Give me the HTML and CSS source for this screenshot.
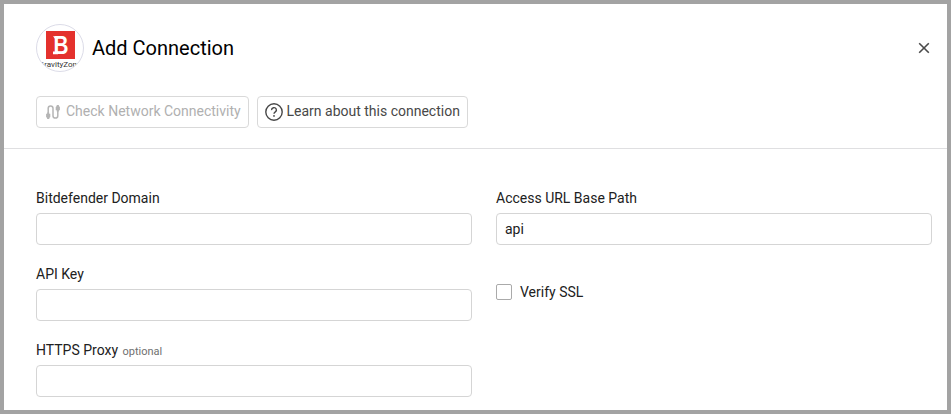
FILE: index.html
```html
<!DOCTYPE html>
<html lang="en">
<head>
<meta charset="utf-8">
<title>Add Connection</title>
<link rel="stylesheet" href="styles.css">
</head>
<body>
<main class="dialog">
  <header class="header">
    <div class="title-row">
      <div class="logo">
        <span class="logo-mark"><svg width="29" height="28" viewBox="0 0 29 28"><path d="M7 5.200h5v2.800H9.200zM7 23.300h5v-2.800H7z" fill="#fff"/><text class="logo-letter" x="7.600" y="23.300" textLength="15" lengthAdjust="spacingAndGlyphs">B</text></svg></span>
        <span class="logo-name">GravityZone</span>
      </div>
      <h1 class="title">Add Connection</h1>
      <button class="close" aria-label="Close">
        <svg width="12" height="12" viewBox="0 0 12 12"><path d="M1.200 1.200l9.600 9.600M10.800 1.200L1.200 10.800" fill="none" stroke="#4a4a4a" stroke-width="1.600"/></svg>
      </button>
    </div>
    <div class="actions">
      <button class="btn btn-check" disabled>
        <svg width="16" height="16" viewBox="0 0 16 16"><path d="M4.200 10V4.300a2.400 2.400 0 0 1 4.800 0v7.400a2.400 2.400 0 0 0 4.800 0V6" fill="none" stroke="#b5b5b5" stroke-width="1.500"/><path d="M3.200 8.500h2v1.300H6.300v3.200l-1 1v1h-2.200v-1l-1-1V9.800h1.100zM12.700 1h2.200v1l1 1v3.200h-1v1.300h-2.200V6.200h-1V3l1-1z" fill="#b5b5b5"/></svg>
        <span>Check Network Connectivity</span>
      </button>
      <button class="btn btn-learn">
        <svg width="18" height="18" viewBox="0 0 18 18"><circle cx="9" cy="9" r="8.200" fill="none" stroke="#484848" stroke-width="1.400"/><path d="M6.600 7.100a2.400 2.300 0 1 1 3.700 1.800c-.9.600-1.300.9-1.300 1.900" fill="none" stroke="#484848" stroke-width="1.400"/><circle cx="9" cy="12.900" r=".9" fill="#484848"/></svg>
        <span>Learn about this connection</span>
      </button>
    </div>
  </header>
  <form class="form">
    <div class="column">
      <label class="field"><span class="label">Bitdefender Domain</span><input class="input" type="text"></label>
      <label class="field"><span class="label">API Key</span><input class="input" type="text"></label>
      <label class="field"><span class="label">HTTPS Proxy <small class="optional">optional</small></span><input class="input" type="text"></label>
    </div>
    <div class="column">
      <label class="field"><span class="label">Access URL Base Path</span><input class="input" type="text" value="api"></label>
      <label class="check"><input class="checkbox" type="checkbox"><span>Verify SSL</span></label>
    </div>
  </form>
</main>
</body>
</html>
```
FILE: styles.css
```css
* { box-sizing: border-box; }
body {
  margin: 0;
  font: 14px/20px Roboto, sans-serif;
  color: #212121;
}
.dialog {
  height: 414px;
  overflow: hidden;
  border: 4px solid #a3a3a3;
  background: #fff;
}
.header {
  height: 145px;
  padding: 20px 16px 0 32px;
  border-bottom: 1px solid #dfdfe1;
}
.title-row { display: flex; align-items: center; height: 48px; }
.logo {
  display: flex;
  flex-direction: column;
  align-items: center;
  width: 48px;
  height: 48px;
  padding-top: 6px;
  overflow: hidden;
  border: 1px solid #dcdce8;
  border-radius: 50%;
}
.logo-mark {
  flex: none;
  width: 29px;
  height: 28px;
  background: #e4312d;
}
.logo-mark svg { display: block; }
.logo-letter { font: bold 25px "Liberation Sans", sans-serif; fill: #fff; }
.logo-name { font-size: 8px; line-height: 12px; color: #333; }
.title {
  margin: 0 auto 0 8px;
  font-size: 20px;
  font-weight: 400;
  line-height: 28px;
  color: #000;
}
.close {
  display: flex;
  padding: 1px;
  border: 0;
  background: none;
}
.actions { display: flex; gap: 8px; margin-top: 24px; }
.btn {
  display: flex;
  align-items: center;
  height: 32px;
  padding: 0 7px;
  border: 1px solid #d9d9d9;
  border-radius: 4px;
  background: #fff;
  font: 14px/20px Roboto, sans-serif;
  color: #484848;
  white-space: nowrap;
}
.btn span { margin-top: -2px; }
.btn-check { width: 213px; gap: 6px; color: #b0b0b0; }
.btn-learn { width: 211px; gap: 3.500px; }
.btn svg { flex: none; }
.form {
  display: grid;
  grid-template-columns: 436px 436px;
  gap: 24px;
  padding: 39px 32px 0;
}
.column { display: flex; flex-direction: column; gap: 12px; }
.field {
  display: flex;
  flex-direction: column;
  gap: 5px;
  height: 64px;
}
.label { flex: none; height: 20px; }
.optional { margin-left: 1px; font-size: 11px; color: #707070; }
.input {
  flex: none;
  width: 100%;
  height: 32px;
  margin: 0;
  padding: 0 8px;
  border: 1px solid #d5d5d5;
  border-radius: 4px;
  background: #fff;
  font: inherit;
  color: inherit;
}
.check { display: flex; align-items: center; gap: 8px; height: 20px; margin-top: 18px; }
.checkbox {
  appearance: none;
  width: 16px;
  height: 16px;
  margin: 0;
  border: 1px solid #aaa;
  border-radius: 2px;
}
```
